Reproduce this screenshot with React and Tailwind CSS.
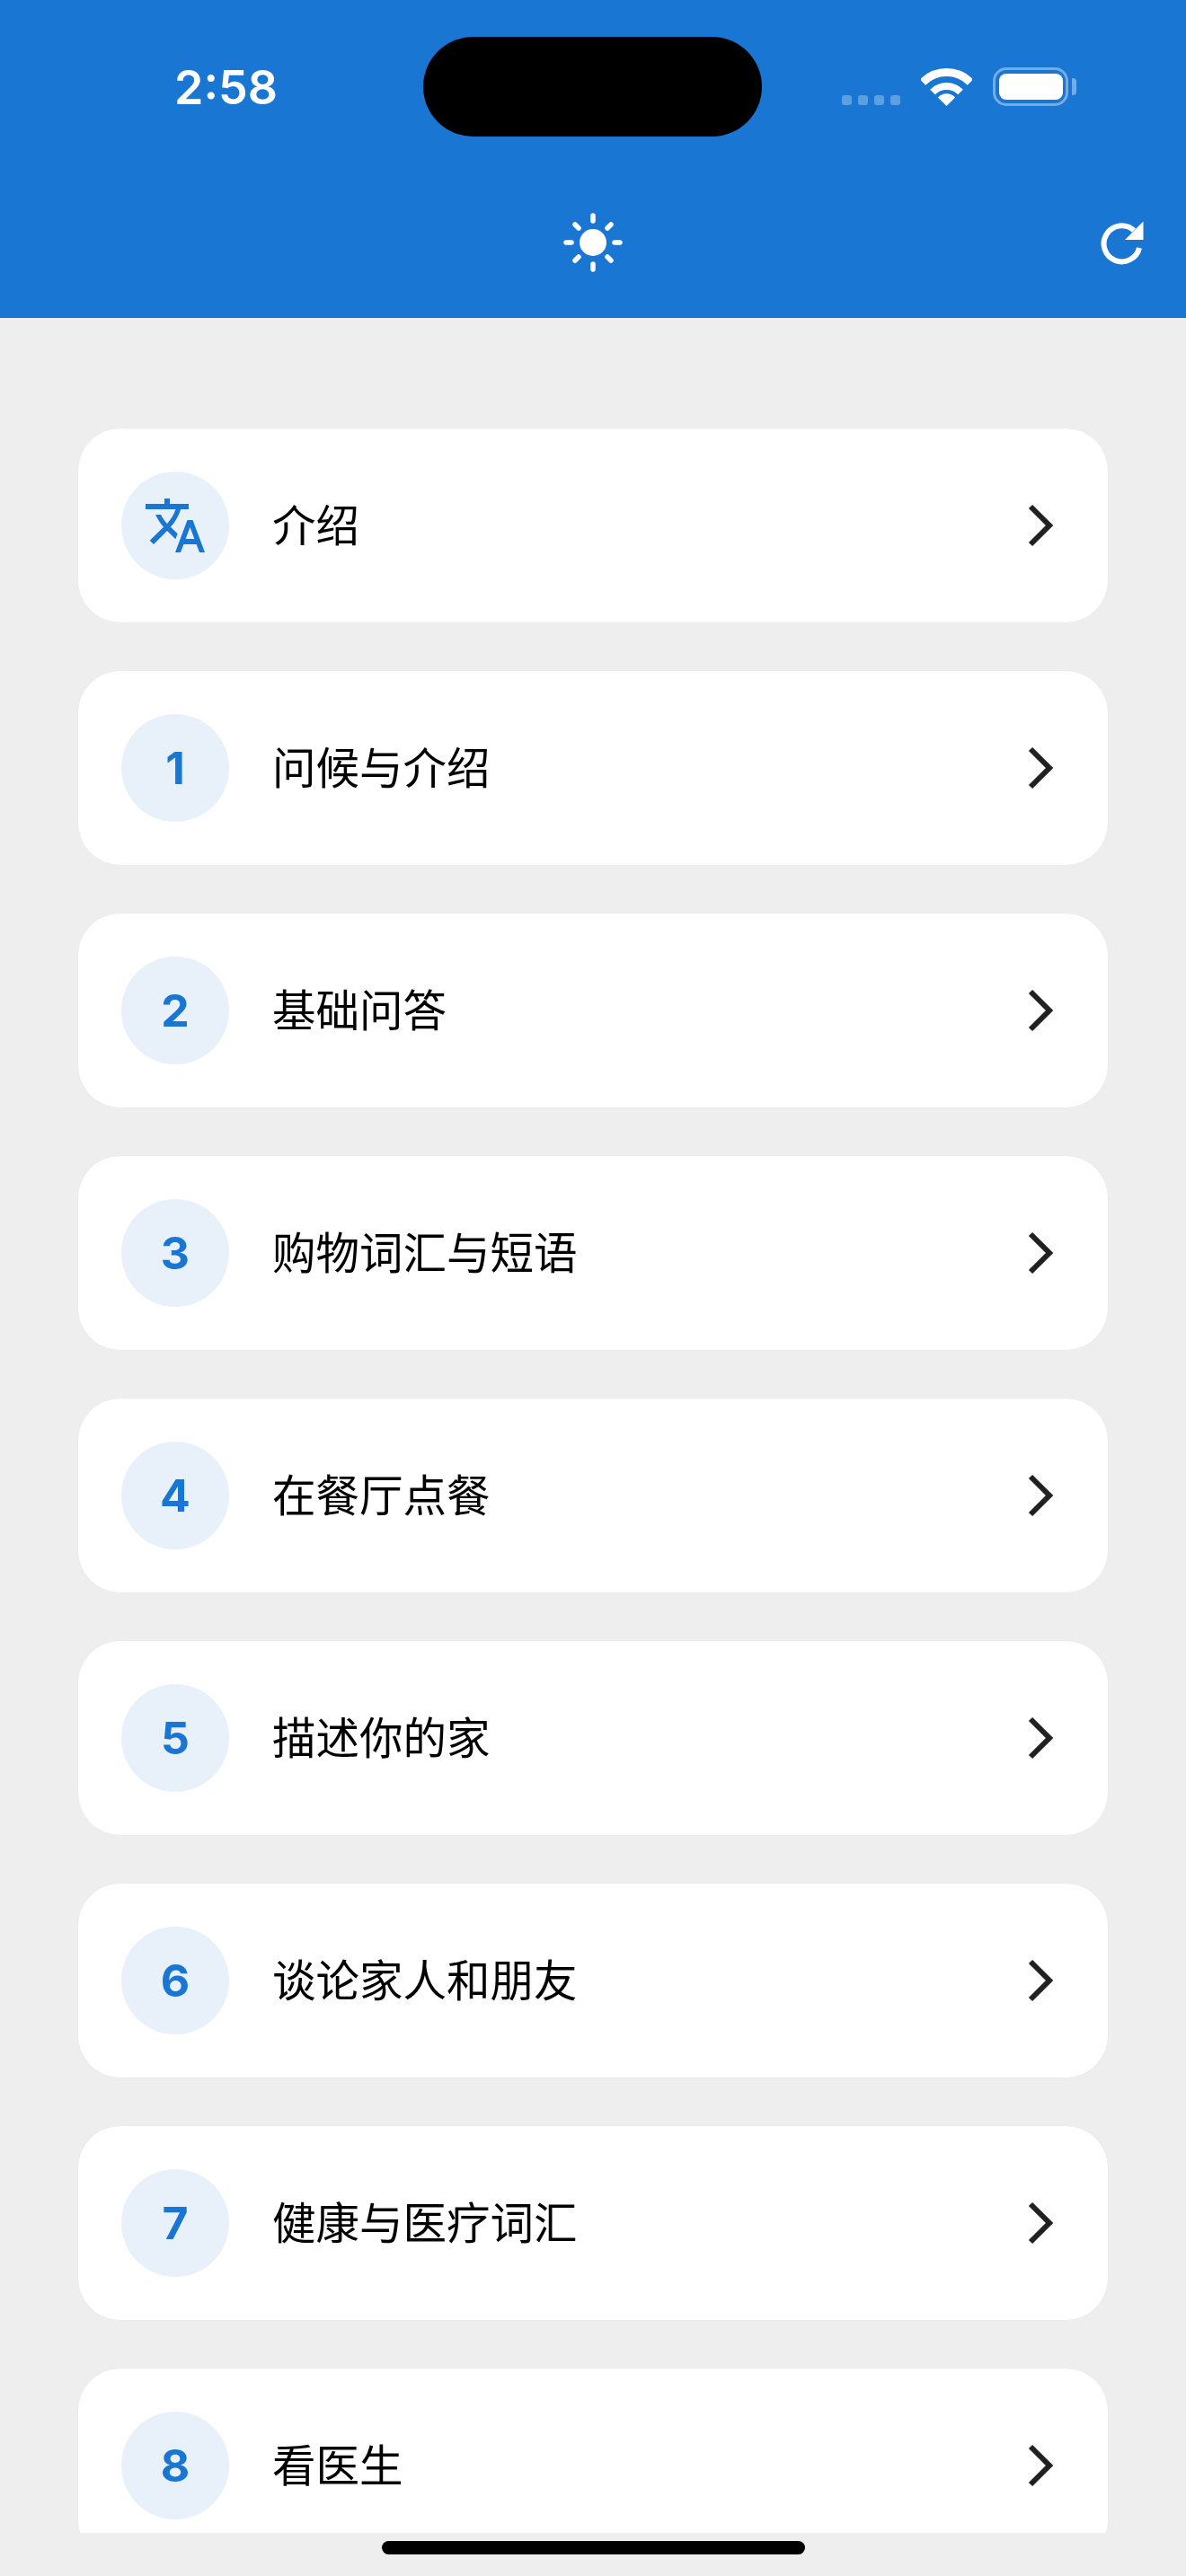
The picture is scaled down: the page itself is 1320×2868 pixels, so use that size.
import React from "react";
import { MdTranslate } from "react-icons/md";

const items = [
  ["icon", "介绍"],
  ["1", "问候与介绍"],
  ["2", "基础问答"],
  ["3", "购物词汇与短语"],
  ["4", "在餐厅点餐"],
  ["5", "描述你的家"],
  ["6", "谈论家人和朋友"],
  ["7", "健康与医疗词汇"],
  ["8", "看医生"],
];

function Wifi() {
  return (
    <svg width="57" height="42" viewBox="0 0 57 42" fill="none" className="block">
      <path d="M2 15.5 A37.5 37.5 0 0 1 55 15.5" stroke="#fff" strokeWidth="9" />
      <path d="M13 26.5 A22 22 0 0 1 44 26.5" stroke="#fff" strokeWidth="8" />
      <path d="M28.5 41 L20 32.5 A12 12 0 0 1 37 32.5 Z" fill="#fff" stroke="#fff" strokeWidth="1.5" strokeLinejoin="round" />
    </svg>
  );
}

function Sun() {
  const rays = [
    [660, 240, 660, 246], [660, 294, 660, 300], [630, 270, 636, 270], [684, 270, 690, 270],
    [640, 250, 644, 254], [680, 250, 676, 254], [640, 290, 644, 286], [680, 290, 676, 286],
  ];
  return (
    <svg width="68" height="68" viewBox="626 236 68 68" className="block">
      <circle cx="660" cy="270" r="15" fill="#fff" />
      {rays.map((r, i) => (
        <line key={i} x1={r[0]} y1={r[1]} x2={r[2]} y2={r[3]} stroke="#fff" strokeWidth="5.5" strokeLinecap="round" />
      ))}
    </svg>
  );
}

function Refresh() {
  return (
    <svg width="50" height="50" viewBox="1223 245 50 50" fill="none" className="block">
      <path d="M1262 256.5 A20 20 0 1 0 1268 276" stroke="#fff" strokeWidth="6" />
      <path d="M1272.5 246.5 L1272.5 267 L1252 267 Z" fill="#fff" />
    </svg>
  );
}

function Row({ mark, label }) {
  return (
    <div className="flex h-[218px] shrink-0 items-center rounded-[48px] border border-[#e9ebec] bg-white pl-[48px] pr-[60px]">
      <div className="flex h-[120px] w-[120px] shrink-0 items-center justify-center rounded-full bg-[#e8f1fa] text-[50px] font-bold text-[#1976d2]">
        {mark === "icon" ? <MdTranslate size={72} color="#1976d2" /> : mark}
      </div>
      <div className="ml-[48px] flex-1 pt-[1px] text-[48.5px] leading-[60px] text-black">{label}</div>
      <svg width="30" height="48" viewBox="0 0 30 48" fill="none" className="block shrink-0">
        <path d="M4 3 L25 24 L4 45" stroke="#212121" strokeWidth="6" />
      </svg>
    </div>
  );
}

export default function App() {
  return (
    <div
      className="relative h-[2868px] w-[1320px] overflow-hidden bg-[#eeeeee]"
      style={{ fontFamily: '"Inter", "Noto Sans CJK SC", sans-serif' }}
    >
      <header className="flex h-[354px] flex-col bg-[#1976d2] text-white">
        <div className="flex h-[118px] items-end pl-[194px] pr-[122px]">
          <div className="-mb-[11px] text-[52px] font-semibold leading-[62px]">2:58</div>
          <div className="ml-auto flex items-end">
            <div className="mr-[23px] flex gap-[7px] pb-[1px]">
              {[0, 1, 2, 3].map((i) => (
                <span key={i} className="h-[11px] w-[11px] rounded-[3px] bg-white/30" />
              ))}
            </div>
            <Wifi />
            <div className="ml-[23px] flex items-center">
              <div className="flex h-[43px] w-[84px] items-center justify-center rounded-[15px] border-[3px] border-white/40">
                <div className="h-[29px] w-[71px] rounded-[8px] bg-white" />
              </div>
              <div className="ml-[4px] h-[19px] w-[5px] rounded-r-[4px] bg-white/40" />
            </div>
          </div>
        </div>
        <div className="mt-[118px] grid h-[68px] grid-cols-3 items-center">
          <div />
          <div className="flex justify-center"><Sun /></div>
          <div className="flex justify-end pr-[47px]"><Refresh /></div>
        </div>
      </header>

      <div className="absolute left-[471px] top-[41px] h-[111px] w-[377px] rounded-full bg-black" />

      <main className="h-[2466px] overflow-hidden px-[86px] pt-[122px]">
        <div className="flex flex-col gap-[52px]">
          {items.map(([m, l]) => (
            <Row key={l} mark={m} label={l} />
          ))}
        </div>
      </main>

      <div className="absolute left-[425px] top-[2829px] h-[15px] w-[471px] rounded-full bg-black" />
    </div>
  );
}
